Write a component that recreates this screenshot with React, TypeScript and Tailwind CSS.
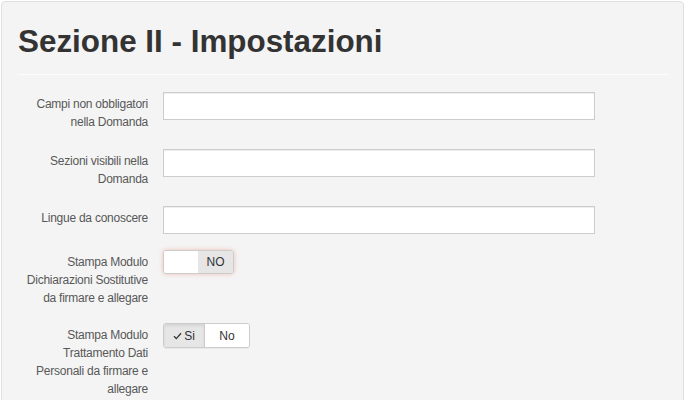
import { useState } from "react";

const labelCls =
  "w-[130px] shrink-0 pt-[3px] text-right text-[12px] tracking-[-0.25px] leading-[18px] text-[#585858]";

function TextRow({ label }: { label: React.ReactNode }) {
  return (
    <div className="flex items-start gap-[15px] mb-[18px]">
      <label className={labelCls}>{label}</label>
      <input
        type="text"
        className="w-[432px] h-[28px] bg-white border border-[#cccccc] shadow-[inset_0_1px_1px_rgba(0,0,0,0.075)] px-2 text-[12px] outline-none"
      />
    </div>
  );
}

function Check() {
  return (
    <svg width="9" height="8" viewBox="0 0 9 8" className="inline-block mr-[2px]">
      <path d="M1 4.2 L3.3 6.6 L8 1.2" fill="none" stroke="#333" strokeWidth="1.3" />
    </svg>
  );
}

export default function App() {
  const [stampa, setStampa] = useState(false);
  const [privacy, setPrivacy] = useState(true);

  return (
    <div className="min-h-[400px] bg-white p-[1px] font-['Liberation_Sans',Arial,sans-serif]">
      <div className="min-h-[420px] bg-[#f4f4f4] border border-[#e0e0e0] rounded-[4px] pl-[16px] pr-[14px] pt-[23px]">
        <h1 className="text-[31.4px] leading-[34px] font-bold text-[#333]">
          Sezione II - Impostazioni
        </h1>
        <div className="mt-[15px] border-t border-[#fcfcfc]" />

        <div className="pt-[17px]">
          <TextRow
            label={
              <>
                Campi non obbligatori
                <br />
                nella Domanda
              </>
            }
          />
          <TextRow
            label={
              <>
                Sezioni visibili nella
                <br />
                Domanda
              </>
            }
          />
          <div className="flex items-start gap-[15px] mb-[16px]">
            <label className={labelCls}>Lingue da conoscere</label>
            <input
              type="text"
              className="w-[432px] h-[28px] bg-white border border-[#cccccc] shadow-[inset_0_1px_1px_rgba(0,0,0,0.075)] px-2 text-[12px] outline-none"
            />
          </div>

          <div className="flex items-start gap-[15px] mb-[16px]">
            <label className={labelCls}>
              Stampa Modulo
              <br />
              Dichiarazioni Sostitutive
              <br />
              da firmare e allegare
            </label>
            <button
              onClick={() => setStampa(!stampa)}
              className="flex h-[24px] w-[71px] overflow-hidden rounded-[3px] border border-[#cccccc] shadow-[0_0_4px_rgba(233,120,100,0.45)] text-[12px] text-[#333]"
            >
              <span className="w-[34px] h-full bg-white" />
              <span className="flex-1 h-full bg-[#e6e6e6] flex items-center justify-center">
                NO
              </span>
            </button>
          </div>

          <div className="flex items-start gap-[15px]">
            <label className={labelCls}>
              Stampa Modulo
              <br />
              Trattamento Dati
              <br />
              Personali da firmare e
              <br />
              allegare
            </label>
            <div className="flex h-[25px] w-[87px] overflow-hidden rounded-[3px] border border-[#cccccc] shadow-[0_1px_1px_rgba(0,0,0,0.05)] text-[12px] text-[#333]">
              <button
                onClick={() => setPrivacy(true)}
                className={`w-[41px] h-full flex items-center justify-center border-r border-[#cccccc] ${
                  privacy ? "bg-[#e6e6e6] shadow-[inset_0_2px_3px_rgba(0,0,0,0.08)]" : "bg-white"
                }`}
              >
                {privacy && <Check />}Si
              </button>
              <button
                onClick={() => setPrivacy(false)}
                className={`flex-1 h-full flex items-center justify-center ${
                  !privacy ? "bg-[#e6e6e6]" : "bg-white"
                }`}
              >
                No
              </button>
            </div>
          </div>
        </div>
      </div>
    </div>
  );
}
